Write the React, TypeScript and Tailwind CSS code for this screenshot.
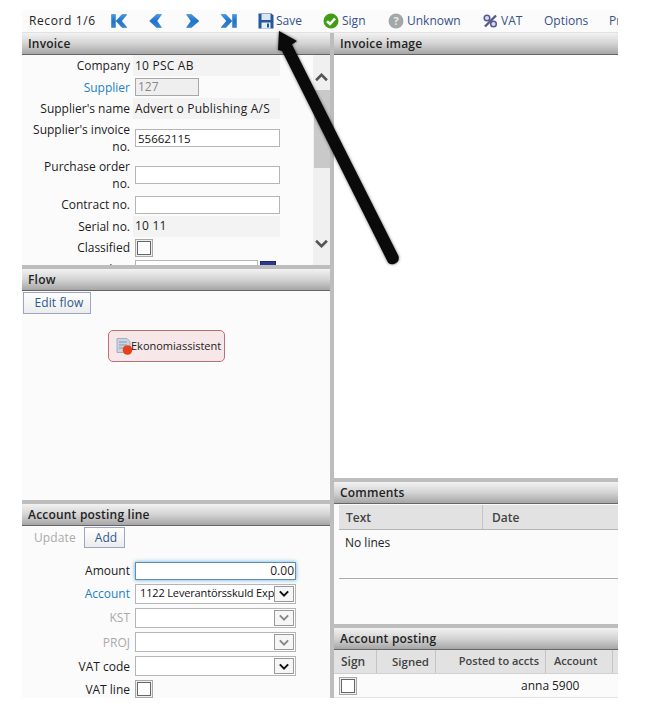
import React from "react";

const Header = ({ title }: { title: string }) => (
  <div className="h-[22px] shrink-0 flex items-center pl-[6px] text-[12px] tracking-[0.2px] font-semibold text-[#222] bg-gradient-to-b from-[#f2f2f2] via-[#d4d4d4] to-[#a6a6a6] border-b border-[#666]">
    {title}
  </div>
);
const Divider = () => <div className="h-1 shrink-0 bg-[#bdbdbd]" />;

const Row = ({ label, h, children, labelClass = "text-[#1c1c1c]" }: { label: React.ReactNode; h: string; children: React.ReactNode; labelClass?: string }) => (
  <div className={`flex items-center ${h}`}>
    <div className={`w-[109px] shrink-0 text-right leading-[17px] pr-[1px] ${labelClass}`}>{label}</div>
    <div className="ml-[4px] flex items-center">{children}</div>
  </div>
);
const ReadOnly = ({ children }: { children: React.ReactNode }) => (
  <div className="w-[147px] h-[21px] -ml-[2px] pl-[2px] bg-[#f3f3f3] flex items-center text-[#1c1c1c] tracking-[0.22px]">{children}</div>
);
const TextBox = ({ className = "w-[145px]", children }: { className?: string; children?: React.ReactNode }) => (
  <div className={`h-[18px] bg-white border border-[#b5b5b5] pl-[2px] leading-[17px] text-[11.5px] text-[#111] ${className}`}>{children}</div>
);
const Check = () => <div className="w-[18px] h-[18px] border border-[#a8a8a8] p-[1px] bg-[#eee]"><div className="w-full h-full bg-white border border-[#666]" /></div>;

const Chevron = ({ dir, className }: { dir: "up" | "down"; className: string }) => (
  <svg viewBox="0 0 12 8" className={className}>
    <path d={dir === "up" ? "M1 6.5 6 1.5 11 6.5" : "M1 1.5 6 6.5 11 1.5"} fill="none" stroke="currentColor" strokeWidth="2.4" />
  </svg>
);
const Select = ({ value, disabled }: { value?: string; disabled?: boolean }) => (
  <div className="w-[161px] h-[20px] bg-white border border-[#b5b5b5] flex items-center relative overflow-hidden">
    <span className="pl-[4px] text-[11px] tracking-[-0.15px] text-[#111] whitespace-nowrap overflow-hidden w-[138px]">{value}</span>
    <div className={`absolute right-[1px] top-[1px] w-[20px] h-[16px] border border-[#999] bg-[#f6f6f6] flex items-center justify-center ${disabled ? "text-[#888]" : "text-[#111]"}`}>
      <Chevron dir="down" className="w-[10px] h-[7px]" />
    </div>
  </div>
);

const NavGrad = () => (
  <svg width="0" height="0" className="absolute">
    <defs>
      <linearGradient id="navg" x1="0" y1="0" x2="0" y2="1">
        <stop offset="0" stopColor="#3f9be8" />
        <stop offset="0.5" stopColor="#1f74c9" />
        <stop offset="1" stopColor="#2f86d8" />
      </linearGradient>
    </defs>
  </svg>
);
const Nav = ({ d }: { d: string }) => (
  <svg viewBox="0 0 16 16" className="w-4 h-4 shrink-0"><path d={d} fill="url(#navg)" stroke="#1a5c9e" strokeWidth="0.4" /></svg>
);

const ToolText = ({ children }: { children: React.ReactNode }) => <span className="text-[#35508a]">{children}</span>;

const Th = ({ children, className = "" }: { children: React.ReactNode; className?: string }) => (
  <div className={`h-full shrink-0 flex items-center font-semibold text-[#444] border-r border-[#c4c4c4] ${className}`}>{children}</div>
);

export default function App() {
  return (
    <div className="relative w-[646px] h-[714px] bg-white overflow-hidden text-[12px] text-[#222]" style={{ fontFamily: '"Open Sans", "Noto Sans", sans-serif' }}>
      <div className="absolute left-[22px] top-[10px] w-[596px] h-[688px] bg-[#fbfbfb] flex flex-col overflow-hidden">
        <NavGrad />
        <div className="h-[23px] shrink-0 flex items-center pl-[7px] border-b border-[#e2e2e2] whitespace-nowrap text-[12px]">
          <span className="w-[82px] shrink-0 text-[#222] tracking-[0.6px]">Record 1/6</span>
          <Nav d="M0.500 1.500h4v13h-4zM5 8l6-6.500h5L10.500 8l5.500 6.500h-5z" />
          <span className="w-[21px] shrink-0" />
          <Nav d="M1.500 8 8.500 1.500h5L9 8l4.500 6.500h-5z" />
          <span className="w-[21px] shrink-0" />
          <Nav d="M1.500 1.500h5L14 8l-7.500 6.500h-5L6 8z" />
          <span className="w-[20px] shrink-0" />
          <Nav d="M15.500 1.500h-4v13h4zM11 8 5 1.500H0L5.500 8 0 14.500h5z" />
          <span className="w-[21px] shrink-0" />
          <svg viewBox="0 0 16 16" className="w-4 h-4 shrink-0"><path d="M0.500 0.500h13l2 2v13H0.500z" fill="#22589e" /><rect x="3.500" y="1" width="9" height="6" fill="#dbe6f3" /><rect x="3.500" y="9.500" width="9" height="6" fill="#e8edf4" /><rect x="9" y="10.500" width="2" height="4" fill="#22589e" /></svg>
          <span className="ml-[2px] w-[47px] shrink-0"><ToolText>Save</ToolText></span>
          <svg viewBox="0 0 16 16" className="w-4 h-4 shrink-0"><circle cx="8" cy="8" r="7.500" fill="#3f9e14" /><path d="M4 8.200 7 11l5-5.500" fill="none" stroke="#fff" strokeWidth="2.600" /></svg>
          <span className="ml-[3px] w-[46px] shrink-0"><ToolText>Sign</ToolText></span>
          <svg viewBox="0 0 16 16" className="w-4 h-4 shrink-0"><circle cx="8" cy="8" r="7.500" fill="#a2a7a9" /><text x="8" y="12" textAnchor="middle" fontSize="11" fontWeight="700" fill="#e8e8e8">?</text></svg>
          <span className="ml-[3px] w-[75px] shrink-0"><ToolText>Unknown</ToolText></span>
          <svg viewBox="0 0 16 16" className="w-4 h-4 shrink-0"><circle cx="5" cy="5" r="2.800" fill="#d8d8ee" stroke="#55598f" strokeWidth="1.500" /><circle cx="11.500" cy="11" r="2.800" fill="#d8d8ee" stroke="#55598f" strokeWidth="1.500" /><path d="M14 2.500 3 13.500" stroke="#55598f" strokeWidth="2.400" /></svg>
          <span className="ml-[3px] w-[43px] shrink-0"><ToolText>VAT</ToolText></span>
          <span className="w-[65px] shrink-0"><ToolText>Options</ToolText></span>
          <ToolText>Print</ToolText>
        </div>
        <div className="flex flex-1 min-h-0">
          <div className="w-[308px] shrink-0 flex flex-col">
            <div className="h-[232px] shrink-0 flex flex-col overflow-hidden">
              <Header title="Invoice" />
              <div className="relative flex-1 overflow-hidden">
                <div className="flex flex-col">
                  <Row label="Company" h="h-[21px]"><ReadOnly>10 PSC AB</ReadOnly></Row>
                  <Row label="Supplier" h="h-[22px]" labelClass="text-[#1f7fc4]"><div className="w-[64px] h-[18px] border border-[#a8a8a8] bg-[#efefef] text-[#888] pl-[2px] leading-[16px]">127</div></Row>
                  <Row label="Supplier's name" h="h-[21px]"><ReadOnly>Advert o Publishing A/S</ReadOnly></Row>
                  <Row label={<>Supplier's invoice<br />no.</>} h="h-[37px]"><TextBox>55662115</TextBox></Row>
                  <Row label={<>Purchase order<br />no.</>} h="h-[38px]"><TextBox /></Row>
                  <Row label="Contract no." h="h-[21px]"><TextBox /></Row>
                  <Row label="Serial no." h="h-[22px]"><ReadOnly>10 11</ReadOnly></Row>
                  <Row label="Classified" h="h-[21px]"><Check /></Row>
                  <Row label="Accounting date" h="h-[22px]">
                    <TextBox className="w-[123px]" />
                    <div className="ml-[2px] w-[16px] h-[16px] bg-[#2b3a8c] border border-[#1c2770]" />
                  </Row>
                </div>
                <div className="absolute left-[291px] top-0 w-[17px] h-full bg-[#f0f0f0] text-[#555] flex flex-col items-center">
                  <Chevron dir="up" className="w-[13px] h-[9px] mt-[18px]" />
                  <div className="w-[16px] h-[78px] mt-[8px] bg-[#c9c9c9]" />
                  <Chevron dir="down" className="w-[13px] h-[9px] mt-[71px]" />
                </div>
              </div>
            </div>
            <Divider />
            <div className="h-[231px] shrink-0 flex flex-col">
              <Header title="Flow" />
              <div className="relative flex-1">
                <button className="ml-[1px] mt-[1px] h-[22px] w-[68px] border border-[#9aa5c8] bg-gradient-to-b from-white to-[#ececec] text-[#2b5a8e] text-[12px] pl-[4px] tracking-[0.1px]">Edit flow</button>
                <div className="absolute left-[86px] top-[39px] w-[117px] h-[32px] rounded-[5px] border border-[#bb7078] bg-[#f7e7e8] flex items-center pl-[7px]">
                  <svg viewBox="0 0 17 17" className="w-[17px] h-[17px] shrink-0"><path d="M1 0.500h10l3 3v11H1z" fill="#c9d5e2" stroke="#7f8ea0" strokeWidth="0.600" /><path d="M3 4h8M3 7h8M3 10h5" stroke="#8897a8" /><circle cx="11.500" cy="12" r="4.800" fill="#e8401c" /></svg>
                  <span className="-ml-[2px] text-[11px] text-[#222]">Ekonomiassistent</span>
                </div>
              </div>
            </div>
            <Divider />
            <div className="flex-1 flex flex-col overflow-hidden">
              <Header title="Account posting line" />
              <div className="flex items-center h-[27px] pt-[1px]">
                <span className="ml-[12px] w-[50px] text-[#aaa] tracking-[0.1px]">Update</span>
                <button className="h-[21px] w-[41px] border border-[#9aa5c8] bg-gradient-to-b from-white to-[#ececec] text-[#2b5a8e] pl-[3px]">Add</button>
              </div>
              <div className="flex flex-col mt-[11px]">
                <Row label="Amount" h="h-[23px]"><div className="w-[161px] h-[18px] bg-white border border-[#5b8fb8] shadow-[0_0_4px_#5fa8dc] text-right pr-[1px] leading-[16px] text-[#222]">0.00</div></Row>
                <Row label="Account" h="h-[23px]" labelClass="text-[#1f7fc4]"><Select value="1122 Leverantörsskuld Export" /></Row>
                <Row label="KST" h="h-[25px]" labelClass="text-[#aaa]"><Select disabled /></Row>
                <Row label="PROJ" h="h-[24px]" labelClass="text-[#aaa]"><Select disabled /></Row>
                <Row label="VAT code" h="h-[24px]"><Select /></Row>
                <Row label="VAT line" h="h-[22px]"><Check /></Row>
              </div>
            </div>
          </div>
          <div className="w-1 shrink-0 bg-[#bdbdbd]" />
          <div className="flex-1 min-w-0 flex flex-col">
            <div className="h-[445px] shrink-0 flex flex-col bg-white">
              <Header title="Invoice image" />
            </div>
            <Divider />
            <div className="h-[142px] shrink-0 flex flex-col overflow-hidden">
              <Header title="Comments" />
              <div className="ml-[5px] flex-1 flex flex-col pt-[1px]">
                <div className="h-[25px] shrink-0 flex bg-[#e2e2e2] border-b border-[#b5b5b5] whitespace-nowrap">
                  <Th className="w-[144px] pl-[7px] pt-[2px]">Text</Th>
                  <div className="h-full flex items-center font-semibold text-[#444] pl-[9px] pt-[2px]">Date</div>
                </div>
                <div className="h-[49px] shrink-0 border-b border-[#aaa] pl-[6px] pt-[4px]">No lines</div>
              </div>
            </div>
            <Divider />
            <div className="flex-1 flex flex-col overflow-hidden">
              <Header title="Account posting" />
              <div className="h-[24px] shrink-0 flex bg-[#e2e2e2] border-b border-[#d0d0d0] whitespace-nowrap">
                <Th className="w-[43px] pl-[7px]">Sign</Th>
                <Th className="w-[59px] justify-end pr-[6px] text-[11.5px]">Signed</Th>
                <Th className="w-[110px] justify-end pr-[6px] text-[11px]">Posted to accts</Th>
                <Th className="w-[67px] pl-[8px] text-[11px]">Account</Th>
              </div>
              <div className="h-[24px] shrink-0 relative flex items-center border-b border-[#e2e2e2]">
                <div className="ml-[5px]"><Check /></div>
                <span className="absolute left-[187px] text-[#222]">anna</span>
                <span className="absolute left-[218px] text-[#222]">5900</span>
              </div>
            </div>
          </div>
        </div>
      </div>
      <svg className="absolute left-0 top-0 pointer-events-none drop-shadow-[0_0_1.5px_rgba(0,0,0,0.6)]" width="646" height="714" viewBox="0 0 646 714">
        <path d="M279 31 L297 41 L292 44.500 L398.500 256 Q400 262 394 264 Q389 265 387.500 261.500 L282 51 L278 50 Z" fill="#0a0a0a" />
      </svg>
    </div>
  );
}
